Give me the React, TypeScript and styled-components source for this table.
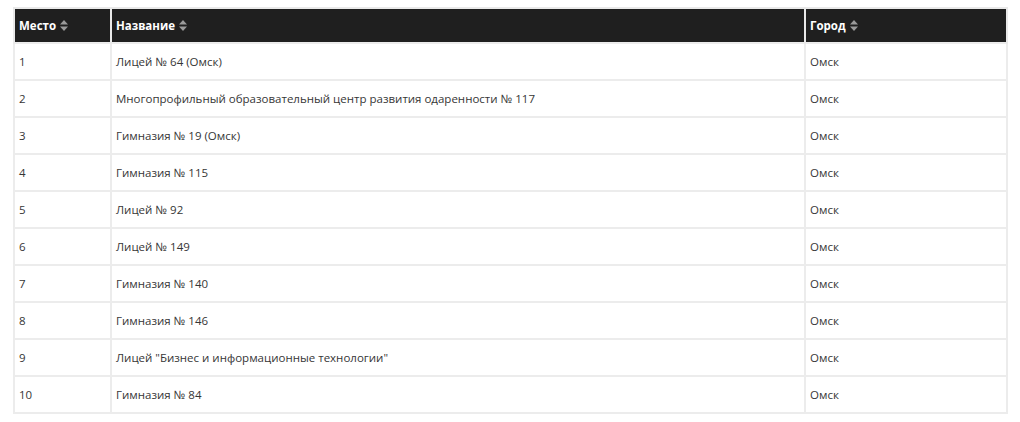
import styled, { createGlobalStyle } from "styled-components";

const GlobalStyle = createGlobalStyle`
  body {
    margin: 0;
    background: #fff;
    font-family: "Open Sans", "Noto Sans", sans-serif;
  }
`;

const Wrapper = styled.div`
  padding: 7px 14px 0 13px;
`;

const Table = styled.table`
  width: 993px;
  border-collapse: collapse;
  table-layout: fixed;
  font-size: 11.5px;
  color: #363636;
`;

const HeadCell = styled.th<{ $w: number }>`
  width: ${(p) => p.$w}px;
  height: 35px;
  padding: 0 4px;
  box-sizing: border-box;
  background: #1f1f1f;
  color: #fff;
  font-weight: 700;
  text-align: left;
  border: 2px solid #e9e9e9;
  border-bottom: 0;
  white-space: nowrap;
`;

const Cell = styled.td`
  height: 37px;
  padding: 0 4px;
  box-sizing: border-box;
  border: 2px solid #ececec;
  white-space: nowrap;
`;

const SortWrap = styled.span`
  display: inline-flex;
  align-items: center;
  gap: 4px;
`;

function SortIcon() {
  return (
    <svg width="8" height="11" viewBox="0 0 8 11" aria-hidden="true" fill="#9a9a9a">
      <path d="M4 0 L8 4.5 H0 Z" />
      <path d="M0 6.5 H8 L4 11 Z" />
    </svg>
  );
}

const rows = [
  { place: 1, name: "Лицей № 64 (Омск)", city: "Омск" },
  { place: 2, name: "Многопрофильный образовательный центр развития одаренности № 117", city: "Омск" },
  { place: 3, name: "Гимназия № 19 (Омск)", city: "Омск" },
  { place: 4, name: "Гимназия № 115", city: "Омск" },
  { place: 5, name: "Лицей № 92", city: "Омск" },
  { place: 6, name: "Лицей № 149", city: "Омск" },
  { place: 7, name: "Гимназия № 140", city: "Омск" },
  { place: 8, name: "Гимназия № 146", city: "Омск" },
  { place: 9, name: "Лицей \"Бизнес и информационные технологии\"", city: "Омск" },
  { place: 10, name: "Гимназия № 84", city: "Омск" },
];

export default function App() {
  return (
    <Wrapper>
      <GlobalStyle />
      <Table>
        <thead>
          <tr>
            <HeadCell $w={97}>
              <SortWrap>Место <SortIcon /></SortWrap>
            </HeadCell>
            <HeadCell $w={694}>
              <SortWrap>Название <SortIcon /></SortWrap>
            </HeadCell>
            <HeadCell $w={202}>
              <SortWrap>Город <SortIcon /></SortWrap>
            </HeadCell>
          </tr>
        </thead>
        <tbody>
          {rows.map((r) => (
            <tr key={r.place}>
              <Cell>{r.place}</Cell>
              <Cell>{r.name}</Cell>
              <Cell>{r.city}</Cell>
            </tr>
          ))}
        </tbody>
      </Table>
    </Wrapper>
  );
}
